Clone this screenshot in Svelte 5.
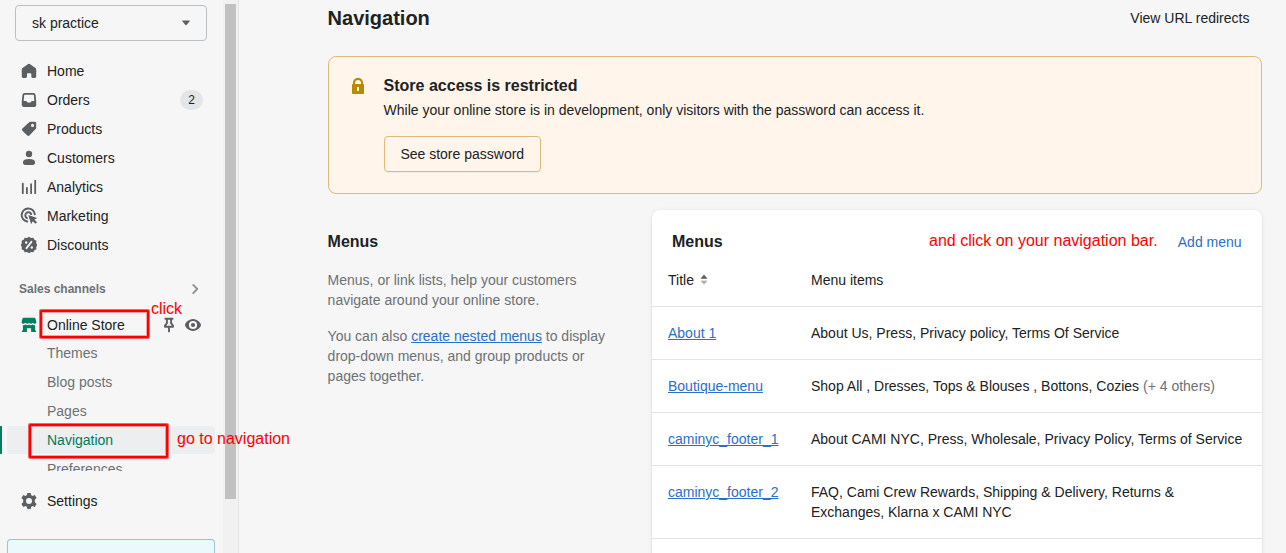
<script>
  const nav = [
    { label: 'Home', icon: 'home' },
    { label: 'Orders', icon: 'orders', count: 2 },
    { label: 'Products', icon: 'products' },
    { label: 'Customers', icon: 'customers' },
    { label: 'Analytics', icon: 'analytics' },
    { label: 'Marketing', icon: 'marketing' },
    { label: 'Discounts', icon: 'discounts' }
  ];
  const channelPages = ['Themes', 'Blog posts', 'Pages', 'Navigation', 'Preferences'];
  const active = 'Navigation';
  const menus = [
    { title: 'About 1', items: 'About Us, Press, Privacy policy, Terms Of Service' },
    { title: 'Boutique-menu', items: 'Shop All , Dresses, Tops & Blouses , Bottons, Cozies', more: '(+ 4 others)' },
    { title: 'caminyc_footer_1', items: 'About CAMI NYC, Press, Wholesale, Privacy Policy, Terms of Service' },
    { title: 'caminyc_footer_2', items: 'FAQ, Cami Crew Rewards, Shipping & Delivery, Returns & Exchanges, Klarna x CAMI NYC' }
  ];
</script>

{#snippet icon(name)}
  <svg class="icon" class:green={name === 'store'} viewBox="0 0 18 18" width="18" height="18" aria-hidden="true">
    {#if name === 'home'}
      <path d="M8.200 2.100a1.300 1.300 0 0 1 1.600 0l5.700 3.900c.4.400.7.900.7 1.500v7.100c0 .8-.6 1.400-1.400 1.400h-2.100c-.8 0-1.400-.6-1.400-1.400v-2.600c0-.4-.3-.7-.7-.7H7.700c-.4 0-.7.3-.7.7v2.600c0 .8-.6 1.400-1.400 1.400H3.200c-.8 0-1.400-.6-1.400-1.400V7.500c0-.6.3-1.100.7-1.500z" />
    {:else if name === 'orders'}
      <path fill-rule="evenodd" d="M4.600 2h8.800c1.200 0 2 .8 2.200 2l.6 6v4c0 1.200-.9 2.100-2.100 2.100H3.900A2.100 2.100 0 0 1 1.800 14v-4l.6-6c.2-1.200 1-2 2.200-2zm.2 1.800c-.4 0-.6.2-.7.600L3.700 9.900h2c.5 0 .9.300 1.100.7.400.8 1 1.200 2.200 1.200s1.800-.4 2.200-1.200c.2-.4.600-.7 1.100-.7h2l-.4-5.500c-.1-.4-.3-.6-.7-.6z" />
    {:else if name === 'products'}
      <path fill-rule="evenodd" d="M10.300 1.800h4.500c.8 0 1.400.6 1.400 1.400v4.500c0 .5-.2 1-.6 1.400l-6.200 6.500c-.6.600-1.500.600-2.100 0l-4.900-4.900c-.6-.6-.6-1.500 0-2.100l6.500-6.200c.4-.4.9-.6 1.400-.6zm2.300 5.200a1.600 1.600 0 1 0 0-3.200 1.600 1.600 0 0 0 0 3.200z" />
    {:else if name === 'customers'}
      <circle cx="9" cy="5" r="3.200" />
      <path d="M3 13c0-2 2.200-3 6-3s6 1 6 3v.8c0 1.300-.8 2.200-2.200 2.200H5.200C3.800 16 3 15.100 3 13.800z" />
    {:else if name === 'analytics'}
      <path d="M1.900 5.600a.9.900 0 0 1 1.800 0v9.600a.9.900 0 0 1-1.800 0zM6 9.800a.9.900 0 0 1 1.800 0v5.400a.9.900 0 0 1-1.800 0zM10.200 6.200a.9.900 0 0 1 1.800 0v9a.9.900 0 0 1-1.800 0zM14.300 2.700a.9.900 0 0 1 1.800 0v12.500a.9.900 0 0 1-1.800 0z" />
    {:else if name === 'marketing'}
      <g fill="none" stroke="#5c5f62" stroke-width="2" stroke-linecap="round">
        <path d="M14.800 7.200A6.600 6.600 0 1 0 7.200 14.600" />
        <path d="M11.200 7A3.100 3.100 0 1 0 7 11.100" />
      </g>
      <path d="M8.300 8 17.200 10.900l-2.800 1.700 2.600 2.600-1.500 1.600-2.700-2.600-1.700 3z" />
    {:else if name === 'discounts'}
      <path d="m9 .8 2 1.100 2.300-.2 1.100 2 2 1.100-.2 2.300L17.200 9l-1 1.900.2 2.300-2 1.100-1.100 2-2.300-.2-2 1.100-2-1.100-2.300.2-1.100-2-2-1.100.2-2.300L.8 9l1-1.900-.2-2.300 2-1.100 1.100-2 2.300.2z" />
      <path d="m11.400 5.800-4.900 6.400" stroke="#f6f6f7" stroke-width="1.900" stroke-linecap="round" />
      <circle cx="6.200" cy="6.500" r="1.200" fill="#f6f6f7" />
      <circle cx="11.800" cy="11.500" r="1.200" fill="#f6f6f7" />
    {:else if name === 'store'}
      <path d="M3.700 1.800h10.600c.5 0 .9.300 1.100.8l.9 2.900v.9c0 .8-.7 1.400-1.600 1.400-.8 0-1.500-.4-2-1-.4.600-1 1-1.800 1S9.500 7.400 9 6.800c-.5.600-1.100 1-1.900 1s-1.400-.4-1.800-1c-.5.600-1.200 1-2 1-.9 0-1.600-.6-1.600-1.400v-.9l.9-2.900c.2-.5.6-.8 1.100-.8z" />
      <path d="M2.900 9.200c1 .1 1.800-.2 2.500-.6 1.100.7 2.500.7 3.600 0 1.100.7 2.500.7 3.600 0 .7.400 1.500.7 2.500.600v5.300h.9v1.600h-4.900v-3.900H6.900v3.900H2v-1.600h.9z" />
    {:else if name === 'settings'}
      <path fill-rule="evenodd" d="M7.300.9h3.400l.4 2.200 1.400.8 2.200-.8 1.900 3-1.800 1.600v2.600l1.800 1.600-1.900 3-2.200-.8-1.400.8-.4 2.200H7.300l-.4-2.200-1.400-.8-2.200.8-1.900-3 1.800-1.600V7.700L1.400 6.100l1.900-3 2.200.8 1.400-.8zM9 12a3 3 0 1 0 0-6 3 3 0 0 0 0 6z" />
    {/if}
  </svg>
{/snippet}

<div class="app">
  <aside>
    <div class="side">
      <button class="select">sk practice
        <svg width="10" height="6" viewBox="0 0 10 6"><path d="M1.700.5h6.600c.5 0 .7.500.4.800L5.500 5c-.3.300-.7.300-1 0L1.300 1.300C1 1 1.200.5 1.700.5z" fill="#5c5f62" /></svg>
      </button>
      <nav>
        {#each nav as item}
          <div class="row">
            {@render icon(item.icon)}<span>{item.label}</span>
            {#if item.count}<span class="count">{item.count}</span>{/if}
          </div>
        {/each}
        <div class="section">Sales channels
          <svg width="8" height="12" viewBox="0 0 8 12"><path d="m2.200 1.900 4.100 4.100-4.100 4.100" fill="none" stroke="#8c9196" stroke-width="1.800" stroke-linecap="round" stroke-linejoin="round" /></svg>
        </div>
        <div class="row store">
          {@render icon('store')}<span>Online Store</span>
          <div class="tools">
            <svg width="12" height="16" viewBox="0 0 12 16"><path d="M2.400 1.800h7.200M3.900 2v4.200L2 8.600v1.200h8V8.600L8.100 6.200V2M6 10v4.400" fill="none" stroke="#5c5f62" stroke-width="1.900" stroke-linejoin="round" stroke-linecap="round" /></svg>
            <svg width="16" height="12" viewBox="0 0 16 12"><path fill-rule="evenodd" d="M8 0c4.500 0 8 4.200 8 6s-3.500 6-8 6-8-4.200-8-6 3.500-6 8-6zm0 10.100a4.100 4.100 0 1 0 0-8.200 4.100 4.100 0 0 0 0 8.200z" fill="#5c5f62" /><circle cx="8" cy="6" r="2.100" fill="#5c5f62" /></svg>
          </div>
        </div>
        {#each channelPages as page}
          <div class="sub" class:active={page === active}><span>{page}</span></div>
        {/each}
      </nav>
      <div class="row settings">{@render icon('settings')}<span>Settings</span></div>
      <div class="notice"></div>
    </div>
    <div class="track"><div class="thumb"></div></div>
  </aside>

  <main>
    <header><h1>Navigation</h1><span>View URL redirects</span></header>
    <section class="banner">
      <svg width="12" height="16" viewBox="0 0 12 16"><path fill-rule="evenodd" d="M1 6V4.800C1 2 3.200 0 6 0s5 2 5 4.800V6c.6 0 1 .4 1 1v8c0 .6-.4 1-1 1H1c-.6 0-1-.4-1-1V7c0-.6.400-1 1-1zm2 0h6V4.800C9 3.100 7.700 2 6 2S3 3.100 3 4.800zm2 3v4h2V9z" fill="#b98900" /></svg>
      <div>
        <h2>Store access is restricted</h2>
        <p>While your online store is in development, only visitors with the password can access it.</p>
        <button>See store password</button>
      </div>
    </section>
    <div class="columns">
      <section class="about">
        <h2>Menus</h2>
        <p>Menus, or link lists, help your customers navigate around your online store.</p>
        <p>You can also <a href="#nested">create nested menus</a> to display drop-down menus, and group products or pages together.</p>
      </section>
      <section class="card">
        <div class="card-head"><h2>Menus</h2><a href="#add">Add menu</a></div>
        <div class="line head">
          <span>Title <svg width="8" height="12" viewBox="0 0 8 12"><path d="M4 .9 7 4.400H1z" fill="#5c5f62" stroke="#5c5f62" stroke-width=".6" /><path d="M4 10.300 1 6.900h6z" fill="#aeb0b2" stroke="#aeb0b2" stroke-width=".6" /></svg></span>
          <span>Menu items</span>
        </div>
        {#each menus as menu}
          <div class="line">
            <span><a href="#menu">{menu.title}</a></span>
            <span>{menu.items} {#if menu.more}<i>{menu.more}</i>{/if}</span>
          </div>
        {/each}
        <div class="line"></div>
      </section>
    </div>
  </main>

  <div class="box box-store"></div>
  <div class="box box-nav"></div>
  <div class="note note-click">click</div>
  <div class="note note-go">go to navigation</div>
  <div class="note note-bar">and click on your navigation bar.</div>
</div>

<style>
  :global(body) { overflow: hidden; }
  .app {
    position: relative; display: flex; width: 1286px; height: 553px; overflow: hidden;
    background: #f6f6f7; color: #202223; font: 14px/20px "Liberation Sans", Arial, sans-serif;
  }
  h1, h2, p { margin: 0; }
  h1 { font-size: 20px; line-height: 28px; }
  h2 { font-size: 16px; line-height: 24px; }
  a { color: #2c6ecb; }
  button { font: inherit; color: inherit; text-align: left; }
  aside { display: flex; flex: none; width: 239px; box-sizing: border-box; border-right: 1px solid #e1e3e5; }
  .side { display: flex; flex-direction: column; width: 223px; padding-top: 5px; }
  .select {
    display: flex; align-items: center; justify-content: space-between; width: 192px; height: 36px;
    flex: none; margin-left: 15px; padding: 0 15px 0 16px; box-sizing: border-box;
    background: #f6f6f7; border: 1px solid #babfc3; border-radius: 4px;
  }
  nav { height: 414px; flex: none; margin-top: 16px; overflow: hidden; }
  .row { display: flex; align-items: center; height: 28px; margin-bottom: 1px; padding: 0 20px; gap: 9px; flex: none; }
  .icon { fill: #5c5f62; flex: none; }
  .green { fill: #008060; }
  .count {
    margin-left: auto; width: 23px; height: 20px; border-radius: 10px; background: #e4e5e7;
    font-size: 12px; text-align: center;
  }
  .section {
    display: flex; align-items: center; justify-content: space-between; height: 28px;
    margin-top: 16px; padding: 0 24px 0 19px; color: #6d7175; font-size: 12px; font-weight: 700;
  }
  .store { margin-top: 8px; margin-bottom: 0; }
  .tools { display: flex; align-items: center; gap: 10px; margin-left: auto; margin-right: 2px; }
  .sub {
    display: flex; align-items: center; height: 28px; margin: 0 8px 1px 7px; padding-left: 40px;
    border-radius: 4px; color: #6d7175;
  }
  .active {
    margin-left: 0; padding-left: 47px; border-radius: 0 4px 4px 0; color: #007a5c;
    background: linear-gradient(90deg, #008060 2px, #f6f6f7 2px, #f6f6f7 7px, #edeeef 7px);
  }
  .settings { margin-top: 16px; }
  .notice { flex: 1; margin: 23px 8px 0 7px; background: #ebf9fc; border: 1px solid #98c6cd; border-bottom: 0; border-radius: 4px 4px 0 0; }
  .track { width: 15px; padding: 4px 2px 0; box-sizing: border-box; background: #f1f1f1; }
  .thumb { height: 495px; background: #c1c1c1; }

  main { flex: 1; padding: 4px 24px 0 88.6px; }
  header { display: flex; align-items: center; justify-content: space-between; height: 28px; padding-right: 12.6px; }
  .banner {
    display: flex; gap: 20px; height: 138px; box-sizing: border-box; margin-top: 24px; padding: 17px 23px 16px;
    background: #fff5ea; border: 1px solid #e1b878; border-radius: 8px;
  }
  .banner > svg { margin-top: 4px; }
  .banner p { margin-top: 2px; }
  .banner button {
    height: 36px; margin-top: 16px; padding: 0 15.800px; background: transparent;
    border: 1px solid #e1b878; border-radius: 4px; box-shadow: 0 1px 0 rgba(0, 0, 0, .04);
  }
  .columns { display: flex; margin-top: 16px; }
  .about { width: 284px; margin-right: 40.4px; padding-top: 20px; color: #6d7175; }
  .about h2 { color: #202223; margin-bottom: 16px; }
  .about p + p { margin-top: 16px; }
  .card { width: 610px; height: 360px; background: #fff; border-radius: 8px; box-shadow: 0 0 5px rgba(23, 24, 24, .05), 0 1px 2px rgba(0, 0, 0, .15); }
  .card-head { display: flex; align-items: center; justify-content: space-between; height: 24px; padding: 20px 20.4px 0 20px; }
  .card-head a { text-decoration: none; }
  .line { display: grid; grid-template-columns: 143px 1fr; padding: 16px 16px; border-top: 1px solid #e1e3e5; }
  .head { border: 0; }
  .head svg { margin-left: 2px; vertical-align: -1px; }
  i { color: #6d7175; font-style: normal; }

  .box { position: absolute; box-sizing: border-box; border: 2px solid #f00; border-radius: 1px; box-shadow: 0 0 0 1px rgba(255, 0, 0, .6), inset 0 0 0 1px rgba(255, 0, 0, .35); }
  .box-store { left: 40px; top: 310px; width: 109px; height: 28px; }
  .box-nav { left: 29px; top: 424px; width: 139px; height: 34px; }
  .note { position: absolute; color: #f00; font-size: 16px; line-height: 20px; white-space: nowrap; }
  .note-click { left: 151px; top: 299px; }
  .note-go { left: 177px; top: 429px; }
  .note-bar { left: 929px; top: 231px; }
</style>
